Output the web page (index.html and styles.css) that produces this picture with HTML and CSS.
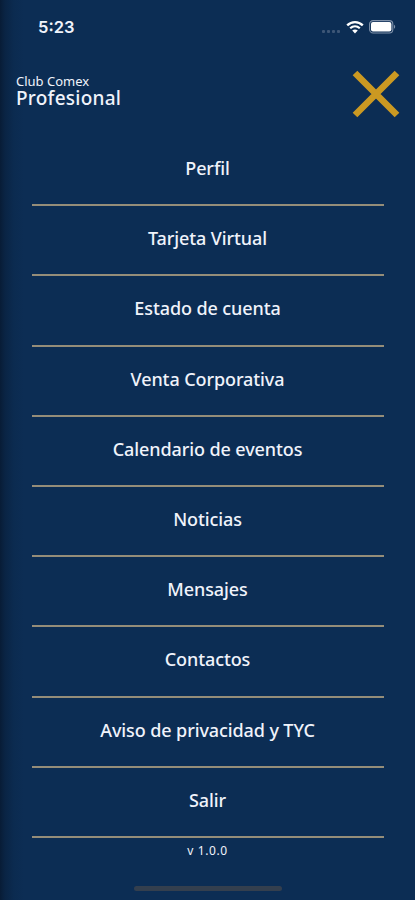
FILE: index.html
```
<!DOCTYPE html>
<html lang="es">
<head>
  <meta charset="UTF-8">
  <meta name="viewport" content="width=device-width, initial-scale=1.0">
  <title>Club Comex Profesional</title>
  <link rel="stylesheet" href="styles.css">
</head>
<body>
  <div class="status-bar">
    <span class="time">5:23</span>
    <div class="status-icons">
      <div class="signal"><i></i><i></i><i></i><i></i></div>
      <svg class="wifi" width="18" height="14" viewBox="0 0 18 14">
        <path d="M1.2 5.3C5.7 1 12.3 1 16.8 5.3" fill="none" stroke="#fff" stroke-width="2.4"/>
        <path d="M4.2 8.3C7 5.7 11 5.7 13.8 8.3" fill="none" stroke="#fff" stroke-width="2.2"/>
        <path d="M6.2 10.6C7.9 9.1 10.1 9.1 11.8 10.6L9 13.5Z" fill="#fff"/>
      </svg>
      <svg class="battery" width="27" height="14" viewBox="0 0 27 14">
        <rect x="0.6" y="0.6" width="23.2" height="12.4" rx="3.5" fill="none" stroke="#7f91aa" stroke-width="1.1"/>
        <rect x="2" y="2" width="20.4" height="9.6" rx="2" fill="#fff"/>
        <path d="M25 4.8C26.6 5.3 26.6 8.3 25 8.8Z" fill="#7f91aa"/>
      </svg>
    </div>
  </div>

  <header>
    <h1 class="brand"><small>Club Comex</small><span>Profesional</span></h1>
    <button class="close" aria-label="Cerrar">
      <svg width="48" height="48" viewBox="0 0 48 48">
        <path d="M3 3L45 45M45 3L3 45" stroke="#cb9922" stroke-width="6.6"/>
      </svg>
    </button>
  </header>

  <nav class="menu">
    <a href="#">Perfil</a>
    <a href="#">Tarjeta Virtual</a>
    <a href="#">Estado de cuenta</a>
    <a href="#">Venta Corporativa</a>
    <a href="#">Calendario de eventos</a>
    <a href="#">Noticias</a>
    <a href="#">Mensajes</a>
    <a href="#">Contactos</a>
    <a href="#">Aviso de privacidad y TYC</a>
    <a href="#">Salir</a>
  </nav>

  <footer>
    <p class="version">v 1.0.0</p>
    <div class="home-indicator"></div>
  </footer>
</body>
</html>
```
FILE: styles.css
```
* {
  box-sizing: border-box;
}
body {
  margin: 0;
  height: 900px;
  display: flex;
  flex-direction: column;
  overflow: hidden;
  font-family: 'Noto Sans', sans-serif;
  color: #f0f3fb;
  /* sombra del borde izquierdo */
  background: linear-gradient(90deg, #081c36 0, #0a2444 5px, #0b2b50 14px, #0c2d54 24px);
}
.status-bar {
  display: flex;
  justify-content: space-between;
  align-items: center;
  height: 54px;
  padding: 0 19px 0 38px;
}
.time {
  font-family: Inter, sans-serif;
  font-size: 16.5px;
  font-weight: 600;
  line-height: 20px;
}
.status-icons {
  display: flex;
  align-items: center;
}
.signal {
  display: flex;
  gap: 2px;
  margin: 8px 6px 0 0;
}
.signal i {
  width: 3px;
  height: 3px;
  border-radius: 1px;
  background: #3d5676;
}
.wifi {
  margin-right: 5px;
}
header {
  display: flex;
  justify-content: space-between;
  align-items: flex-start;
  height: 82px;
  padding: 16px 15px 0 16px;
}
.brand {
  margin: 4px 0 0;
  font-size: 19px;
  font-weight: 500;
  line-height: 17px;
}
.brand small,
.brand span {
  display: block;
}
.brand small {
  font-size: 13px;
  font-weight: 400;
  line-height: 14px;
}
.brand span {
  margin-top: 2px;
  letter-spacing: 0.25px;
}
.close {
  padding: 0;
  border: 0;
  background: none;
}
.close svg {
  display: block;
}
.menu {
  display: flex;
  flex-direction: column;
  margin: 0 31px 0 32px;
}
.menu a {
  height: 70.2px;
  padding: 20px 1px 0 0;
  border-bottom: 2px solid #958d79;
  color: inherit;
  font-size: 18px;
  font-weight: 500;
  letter-spacing: -0.1px;
  line-height: 25px;
  text-align: center;
  text-decoration: none;
  white-space: nowrap;
}
footer {
  display: flex;
  flex-direction: column;
  align-items: center;
}
.version {
  margin: 4px 0 26px;
  font-size: 12px;
  letter-spacing: 0.6px;
  line-height: 18px;
}
.home-indicator {
  width: 148px;
  height: 5px;
  border-radius: 3px;
  background: #343f4e;
}
```
